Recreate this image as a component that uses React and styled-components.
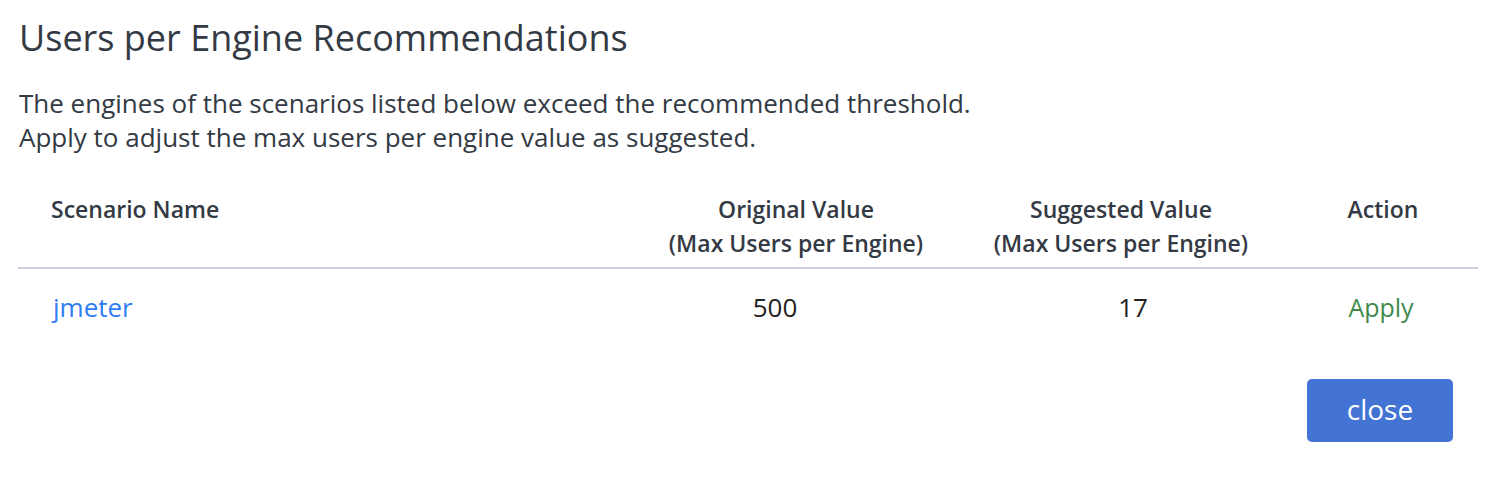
import styled, { createGlobalStyle } from "styled-components";

const GlobalStyle = createGlobalStyle`
  body {
    margin: 0;
    background: #fff;
    font-family: "Open Sans", "Noto Sans", sans-serif;
  }
`;

const Dialog = styled.div`
  width: 1488px;
  height: 482px;
  box-sizing: border-box;
  padding: 14px 10px 0 18px;
  color: #333a44;
`;

const Title = styled.h2`
  margin: 0 0 0 1px;
  font-size: 36px;
  font-weight: 400;
  line-height: 48px;
  color: #343a44;
`;

const Description = styled.div`
  margin: 24px 0 0 1px;
  font-size: 26px;
  color: #333a44;
`;

const DescLine = styled.p`
  margin: 0;
  line-height: 34px;
`;

const Table = styled.div`
  margin-top: 38px;
  display: grid;
  grid-template-columns: 620px 316px 334px 190px;
`;

const HeadCell = styled.div`
  font-size: 23px;
  font-weight: 600;
  line-height: 34px;
  color: #343a44;
  text-align: ${p => (p.left ? "left" : "center")};
  padding: 0 0 7px ${p => (p.left ? "33px" : "0")};
  border-bottom: 2px solid #cdd3dc;
`;

const Cell = styled.div`
  font-size: ${p => p.size || 26}px;
  line-height: 32px;
  padding: 22px ${p => p.shiftLeft || 0}px 0 ${p => p.shiftRight || 0}px;
  text-align: ${p => (p.left ? "left" : "center")};
  color: ${p => p.color || "#222"};
`;

const LinkText = styled.a`
  color: #2f7cf6;
  text-decoration: none;
  cursor: pointer;
`;

const Footer = styled.div`
  display: flex;
  justify-content: flex-end;
  padding: 56px 25px 0 0;
`;

const CloseButton = styled.button`
  width: 146px;
  height: 63px;
  border: none;
  border-radius: 5px;
  background: #4373d3;
  color: #fff;
  font-family: inherit;
  font-size: 28px;
  padding: 0 0 3px;
  cursor: pointer;
`;

export default function App() {
  return (
    <>
      <GlobalStyle />
      <Dialog>
        <Title>Users per Engine Recommendations</Title>
        <Description>
          <DescLine>The engines of the scenarios listed below exceed the recommended threshold.</DescLine>
          <DescLine>Apply to adjust the max users per engine value as suggested.</DescLine>
        </Description>

        <Table>
          <HeadCell left>Scenario Name</HeadCell>
          <HeadCell>
            Original Value
            <br />
            (Max Users per Engine)
          </HeadCell>
          <HeadCell>
            Suggested Value
            <br />
            (Max Users per Engine)
          </HeadCell>
          <HeadCell>Action</HeadCell>

          <Cell left shiftRight={35}>
            <LinkText>jmeter</LinkText>
          </Cell>
          <Cell shiftLeft={42}>500</Cell>
          <Cell shiftRight={24}>17</Cell>
          <Cell size={25} shiftLeft={4} color="#3e8a4c">Apply</Cell>
        </Table>

        <Footer>
          <CloseButton>close</CloseButton>
        </Footer>
      </Dialog>
    </>
  );
}
